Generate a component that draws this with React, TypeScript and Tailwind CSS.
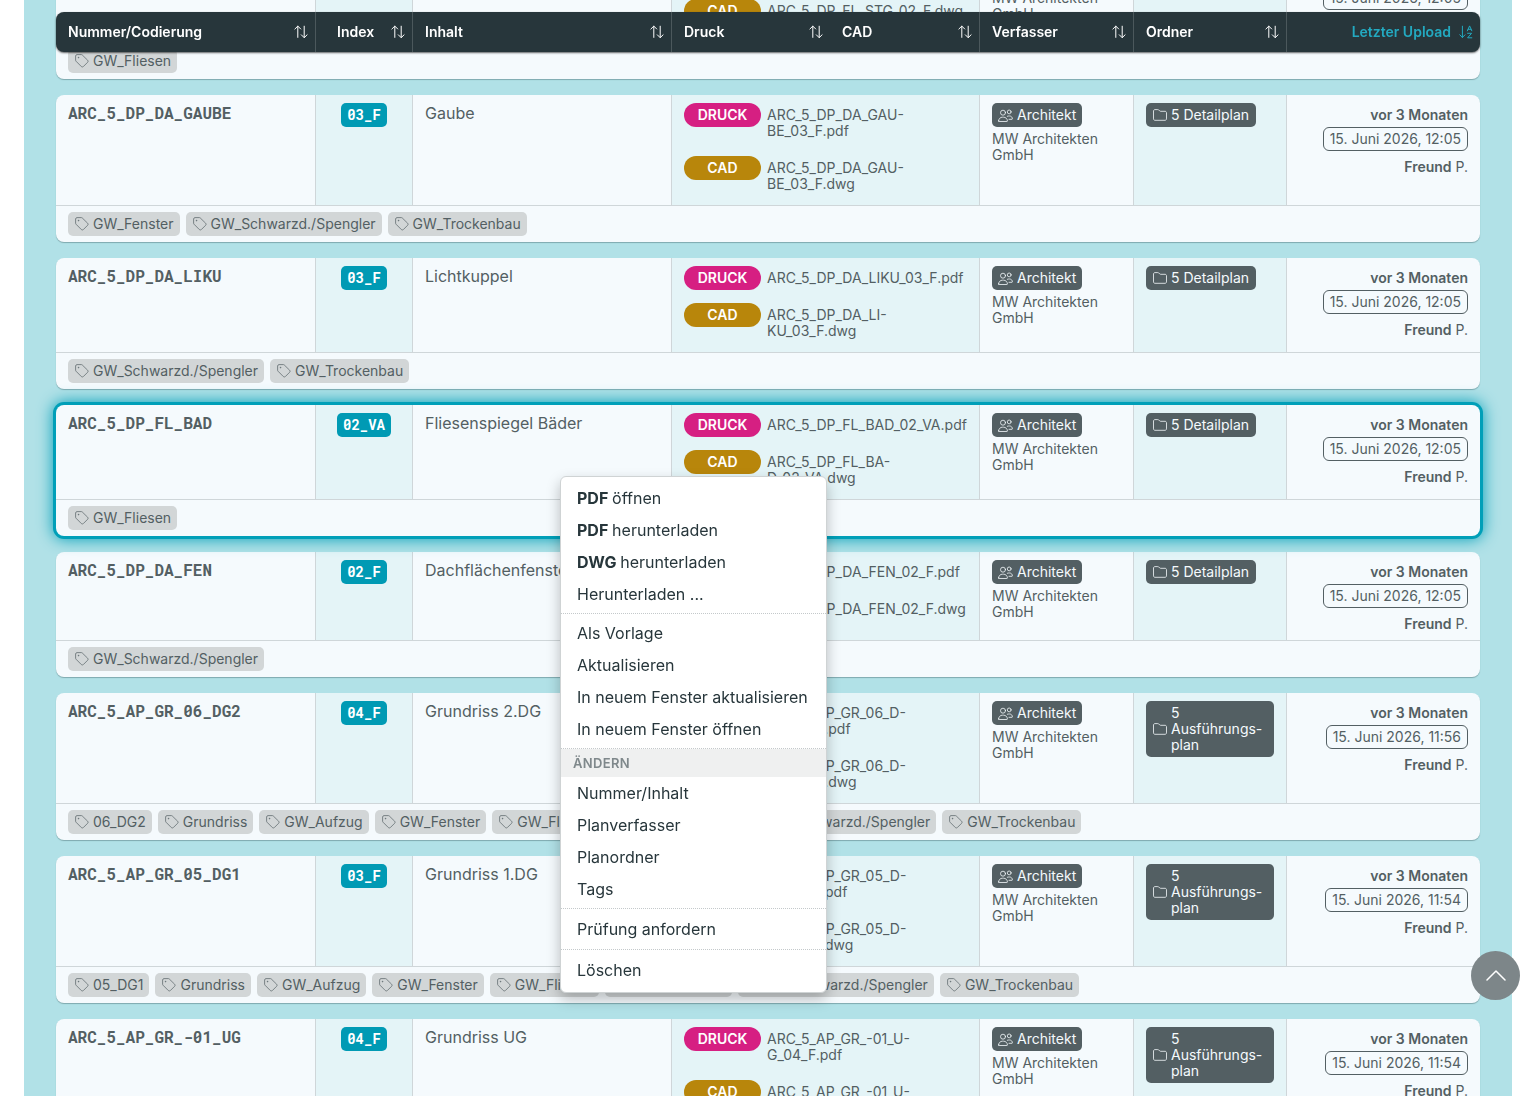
import React, { useState } from 'react';

interface Plan {
  code: string;
  index: string;
  title: string;
  pdf: string;
  dwg: string;
  folder: string;
  uploaded: string;
  tags: string[];
  selected?: boolean;
}

const plans: Plan[] = [
  {
    code: 'ARC_5_DP_FL_STG',
    index: '02_F',
    title: 'Fliesenspiegel Stiegenhaus',
    pdf: 'ARC_5_DP_FL_STG_02_F.pdf',
    dwg: 'ARC_5_DP_FL_STG_02_F.dwg',
    folder: '5 Detailplan',
    uploaded: '15. Juni 2026, 12:05',
    tags: ['GW_Fliesen'],
  },
  {
    code: 'ARC_5_DP_DA_GAUBE',
    index: '03_F',
    title: 'Gaube',
    pdf: 'ARC_5_DP_DA_GAU-\nBE_03_F.pdf',
    dwg: 'ARC_5_DP_DA_GAU-\nBE_03_F.dwg',
    folder: '5 Detailplan',
    uploaded: '15. Juni 2026, 12:05',
    tags: ['GW_Fenster', 'GW_Schwarzd./Spengler', 'GW_Trockenbau'],
  },
  {
    code: 'ARC_5_DP_DA_LIKU',
    index: '03_F',
    title: 'Lichtkuppel',
    pdf: 'ARC_5_DP_DA_LIKU_03_F.pdf',
    dwg: 'ARC_5_DP_DA_LI-\nKU_03_F.dwg',
    folder: '5 Detailplan',
    uploaded: '15. Juni 2026, 12:05',
    tags: ['GW_Schwarzd./Spengler', 'GW_Trockenbau'],
  },
  {
    code: 'ARC_5_DP_FL_BAD',
    index: '02_VA',
    title: 'Fliesenspiegel Bäder',
    pdf: 'ARC_5_DP_FL_BAD_02_VA.pdf',
    dwg: 'ARC_5_DP_FL_BA-\nD_02_VA.dwg',
    folder: '5 Detailplan',
    uploaded: '15. Juni 2026, 12:05',
    tags: ['GW_Fliesen'],
    selected: true,
  },
  {
    code: 'ARC_5_DP_DA_FEN',
    index: '02_F',
    title: 'Dachflächenfenster',
    pdf: 'ARC_5_DP_DA_FEN_02_F.pdf',
    dwg: 'ARC_5_DP_DA_FEN_02_F.dwg',
    folder: '5 Detailplan',
    uploaded: '15. Juni 2026, 12:05',
    tags: ['GW_Schwarzd./Spengler'],
  },
  {
    code: 'ARC_5_AP_GR_06_DG2',
    index: '04_F',
    title: 'Grundriss 2.DG',
    pdf: 'ARC_5_AP_GR_06_D-\nG2_04_F.pdf',
    dwg: 'ARC_5_AP_GR_06_D-\nG2_04_F.dwg',
    folder: '5\nAusführungs-\nplan',
    uploaded: '15. Juni 2026, 11:56',
    tags: ['06_DG2', 'Grundriss', 'GW_Aufzug', 'GW_Fenster', 'GW_Fliesen', 'GW_Schlosser', 'GW_Schwarzd./Spengler', 'GW_Trockenbau'],
  },
  {
    code: 'ARC_5_AP_GR_05_DG1',
    index: '03_F',
    title: 'Grundriss 1.DG',
    pdf: 'ARC_5_AP_GR_05_D-\nG1_03_F.pdf',
    dwg: 'ARC_5_AP_GR_05_D-\nG1_03_F.dwg',
    folder: '5\nAusführungs-\nplan',
    uploaded: '15. Juni 2026, 11:54',
    tags: ['05_DG1', 'Grundriss', 'GW_Aufzug', 'GW_Fenster', 'GW_Fliesen', 'GW_Schlosser', 'GW_Schwarzd./Spengler', 'GW_Trockenbau'],
  },
  {
    code: 'ARC_5_AP_GR_-01_UG',
    index: '04_F',
    title: 'Grundriss UG',
    pdf: 'ARC_5_AP_GR_-01_U-\nG_04_F.pdf',
    dwg: 'ARC_5_AP_GR_-01_U-\nG_04_F.dwg',
    folder: '5\nAusführungs-\nplan',
    uploaded: '15. Juni 2026, 11:54',
    tags: ['-01_UG', 'Grundriss', 'GW_Aufzug'],
  },
];

const SortIcon = () => (
  <svg viewBox="0 0 14 14" className="h-3.5 w-3.5 shrink-0" fill="none" stroke="currentColor" strokeWidth="1" strokeLinecap="round" strokeLinejoin="round">
    <path d="M3.8 12.4V1.2M.9 4L3.8 1.1 6.7 4M10.2 1.2v11.2M7.3 9.8l2.9 2.9 2.9-2.9" />
  </svg>
);

const SortAzIcon = () => (
  <svg viewBox="0 0 14 14" className="h-3.5 w-3.5 shrink-0" fill="none" stroke="currentColor" strokeWidth="1" strokeLinecap="round" strokeLinejoin="round">
    <path d="M3.4 1.2v11.2M.8 9.8l2.6 2.7L6 9.8M8.4 5.8l2.2-4.9 2.2 4.9M9.1 4.3h3M8.6 8.3h4l-4 4.5h4.2" />
  </svg>
);

const TagIcon = () => (
  <svg viewBox="0 0 14 14" className="h-3.5 w-3.5 shrink-0" fill="none" stroke="currentColor" strokeWidth="0.7" strokeLinejoin="round">
    <path d="M.6 2v4.2c0 .4.2.8.4 1l5.3 5.3c.6.6 1.5.6 2.1 0l4.2-4.2c.6-.6.6-1.5 0-2.1L7.3 1C7 .8 6.7.6 6.3.6H2C1.2.6.6 1.2.6 2z" />
    <circle cx="3.6" cy="3.6" r="0.4" fill="currentColor" />
  </svg>
);

const UsersIcon = () => (
  <svg viewBox="0 0 15 13" className="h-[13px] w-[15px] shrink-0" fill="none" stroke="currentColor" strokeWidth="0.8" strokeLinecap="round" strokeLinejoin="round">
    <circle cx="5" cy="3.7" r="2.5" />
    <circle cx="11.2" cy="2.9" r="1.9" />
    <path d="M.6 12c0-2.2 1.7-3.8 3.8-3.8h1.2c2.1 0 3.8 1.6 3.8 3.8 0 .3-.2.5-.5.5H1.1C.8 12.5.6 12.3.6 12zM9.3 7.3c.4-.2.9-.3 1.4-.3h.9c1.6 0 2.8 1.3 2.8 2.9 0 .2-.2.4-.4.4h-3" />
  </svg>
);

const FolderIcon = () => (
  <svg viewBox="0 0 14 12" className="h-3 w-3.5 shrink-0" fill="none" stroke="currentColor" strokeWidth="0.8" strokeLinejoin="round">
    <path d="M.5 9.9V2C.5 1.2 1.2.6 2 .6h2.8c.4 0 .8.2 1 .4l.8.8c.3.3.7.5 1.1.5H12c.8 0 1.5.6 1.5 1.4v6.2c0 .8-.7 1.4-1.5 1.4H2c-.8 0-1.5-.6-1.500-1.400z" />
  </svg>
);

interface HeadCellProps {
  label: string;
  className?: string;
  divider?: boolean;
}

const HeadCell: React.FC<HeadCellProps> = ({ label, className = 'justify-between pl-3', divider = true }) => (
  <th className={divider ? 'border-r border-[#4b585c] font-semibold' : 'font-semibold'}>
    <button className={`flex h-full w-full items-center pr-[7px] ${className}`}>
      <span>{label}</span>
      <SortIcon />
    </button>
  </th>
);

const FileLine: React.FC<{ kind: string; color: string; name: string }> = ({ kind, color, name }) => (
  <div className="flex items-start gap-1.5">
    <button className={`h-6 w-[77px] shrink-0 rounded-full text-sm font-semibold text-white ${color}`}>{kind}</button>
    <a href="#" className="whitespace-pre pt-1 pb-[5px] leading-4">{name}</a>
  </div>
);

const PlanCard: React.FC<{ plan: Plan }> = ({ plan }) => (
  <tbody
    className={`block rounded-lg bg-[#f5fafd] ${
      plan.selected
        ? 'relative shadow-[0_0_0_3px_#009fb8,0_0_16px_3px_#009fb8]'
        : 'shadow-[0_1px_1px_#7fa9ae]'
    }`}
  >
    <tr className="grid grid-cols-[260fr_97fr_259fr_308fr_154fr_153fr_193fr] border-b border-[#cfd6d9]">
      <td className="border-r border-[#cfd6d9] px-3 pt-2 font-['Roboto_Mono','DejaVu_Sans_Mono',monospace] text-base leading-5 font-bold">
        {plan.code}
      </td>
      <td className="border-r border-[#cfd6d9] bg-[#e4f4f7] pt-2 text-center">
        <span className="inline-block h-6 rounded-[5px] bg-[#009ab4] px-1.5 font-['Roboto_Mono','DejaVu_Sans_Mono',monospace] text-sm leading-6 font-bold text-white">
          {plan.index}
        </span>
      </td>
      <td className="border-r border-[#cfd6d9] px-3 pt-2 text-base leading-5">{plan.title}</td>
      <td colSpan={2} className="flex flex-col gap-3 border-r border-[#cfd6d9] bg-[#e4f4f7] py-2 pl-3">
        <FileLine kind="DRUCK" color="bg-[#d61f82]" name={plan.pdf} />
        <FileLine kind="CAD" color="bg-[#b8860b]" name={plan.dwg} />
      </td>
      <td className="border-r border-[#cfd6d9] px-3 pt-2 leading-4">
        <span className="mb-1 inline-flex h-6 items-center gap-1 rounded-[5px] bg-[#535f63] px-1.5 text-[#f5fafd]">
          <UsersIcon />
          Architekt
        </span>
        <p>MW Architekten GmbH</p>
      </td>
      <td className="border-r border-[#cfd6d9] bg-[#e4f4f7] px-3 pt-2">
        <span className={`${plan.folder.includes('\n') ? 'flex' : 'inline-flex'} items-center gap-1 rounded-[5px] bg-[#535f63] px-[7px] py-1 leading-4 whitespace-pre text-[#f5fafd]`}>
          <FolderIcon />
          {plan.folder}
        </span>
      </td>
      <td className="flex flex-col items-end px-3 pt-2 pb-1 leading-6">
        <b className="font-semibold">vor 3 Monaten</b>
        <span className="mb-1 h-6 rounded-md border border-[#535f63] px-1.5 leading-[22px]">{plan.uploaded}</span>
        <span><b className="font-semibold">Freund</b> P.</span>
      </td>
    </tr>
    <tr className="block">
      <td colSpan={8} className="flex gap-1.5 px-3 py-1.5">
        {plan.tags.map((tag) => (
          <span key={tag} className="flex h-6 items-center gap-1 rounded-[5px] bg-[#d2d6d7] pr-1.5 pl-[7px] whitespace-nowrap">
            <TagIcon />
            {tag}
          </span>
        ))}
      </td>
    </tr>
  </tbody>
);

const MenuItem: React.FC<{ bold?: string; children: React.ReactNode }> = ({ bold, children }) => (
  <button role="menuitem" className="block h-8 w-full px-4 text-left whitespace-nowrap hover:bg-[#e4f4f7]">
    {bold && <b className="font-bold">{bold} </b>}
    {children}
  </button>
);

const ContextMenu = () => (
  <div
    role="menu"
    className="absolute top-[476px] left-[560px] z-20 w-[267px] rounded-md border border-[#cfd3d4] bg-white py-0.5 text-base text-[#27363b] shadow-[0_6px_14px_rgba(0,0,0,0.25)]"
  >
    <div className="py-[3px]">
      <MenuItem bold="PDF">öffnen</MenuItem>
      <MenuItem bold="PDF">herunterladen</MenuItem>
      <MenuItem bold="DWG">herunterladen</MenuItem>
      <MenuItem>Herunterladen ...</MenuItem>
    </div>
    <div className="border-t border-dotted border-[#c4c9cb] py-[3px]">
      <MenuItem>Als Vorlage</MenuItem>
      <MenuItem>Aktualisieren</MenuItem>
      <MenuItem>In neuem Fenster aktualisieren</MenuItem>
      <MenuItem>In neuem Fenster öffnen</MenuItem>
    </div>
    <div className="border-t border-dotted border-[#c4c9cb] pb-[3px]">
      <h6 className="h-7 bg-[#eff0f0] px-3 text-[13px] leading-7 font-semibold tracking-wide text-[#7f888b]">ÄNDERN</h6>
      <MenuItem>Nummer/Inhalt</MenuItem>
      <MenuItem>Planverfasser</MenuItem>
      <MenuItem>Planordner</MenuItem>
      <MenuItem>Tags</MenuItem>
    </div>
    <div className="border-t border-dotted border-[#c4c9cb] py-1">
      <MenuItem>Prüfung anfordern</MenuItem>
    </div>
    <div className="border-t border-dotted border-[#c4c9cb] py-1">
      <MenuItem>Löschen</MenuItem>
    </div>
  </div>
);

const App: React.FC = () => {
  const [menuOpen, setMenuOpen] = useState(true);

  return (
    <div
      className="relative h-screen overflow-hidden bg-white px-6 font-['Inter',sans-serif] text-sm text-[#535f63]"
      onClick={() => setMenuOpen(false)}
    >
      <main className="min-h-full bg-[#b1e1e7] px-8">
        {/* list is scrolled down a bit, the column heads stay in view */}
        <table className="-mt-[102px] flex flex-col gap-4">
          <thead className="sticky top-3 z-10 block rounded-lg bg-[#27363b] text-white shadow-[0_1px_2px_rgba(0,0,0,0.6)]">
            <tr className="grid h-10 grid-cols-[260fr_97fr_259fr_158fr_150fr_154fr_153fr_193fr]">
              <HeadCell label="Nummer/Codierung" />
              <HeadCell label="Index" className="justify-between pl-[21px]" />
              <HeadCell label="Inhalt" />
              <HeadCell label="Druck" divider={false} />
              <HeadCell label="CAD" />
              <HeadCell label="Verfasser" />
              <HeadCell label="Ordner" />
              <th className="font-semibold text-[#23a9c0]">
                <button className="flex h-full w-full items-center justify-end gap-2 pr-[7px]">
                  <span>Letzter Upload</span>
                  <SortAzIcon />
                </button>
              </th>
            </tr>
          </thead>
          {plans.map((plan) => (
            <PlanCard key={plan.code} plan={plan} />
          ))}
        </table>
      </main>

      {menuOpen && <ContextMenu />}

      <button
        aria-label="Nach oben"
        className="absolute right-4 bottom-24 z-20 flex h-[49px] w-[49px] items-center justify-center rounded-full bg-[#7d8689] text-white"
      >
        <svg viewBox="0 0 20 11" className="h-[11px] w-5" fill="none" stroke="currentColor" strokeWidth="1.5" strokeLinecap="round" strokeLinejoin="round">
          <path d="M1 10l9-9 9 9" />
        </svg>
      </button>
    </div>
  );
};

export default App;
